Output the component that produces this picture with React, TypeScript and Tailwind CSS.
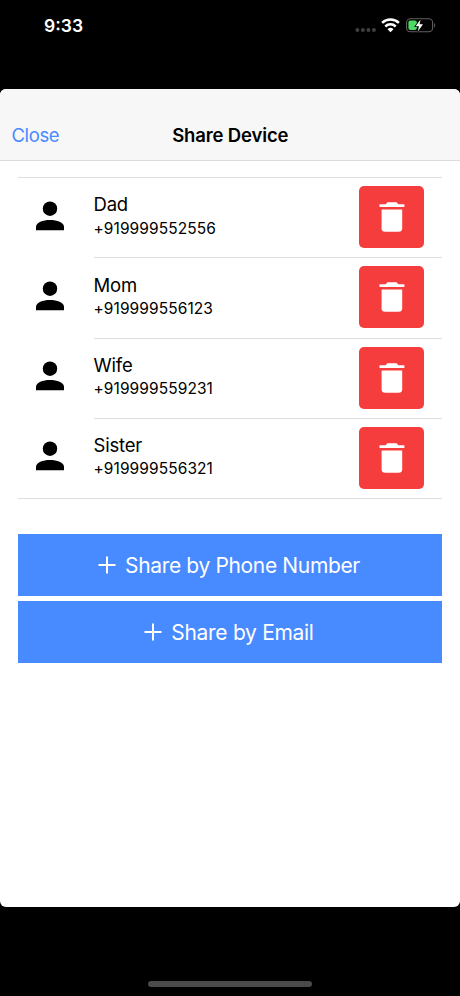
const contacts = [
  { name: 'Dad', phone: '+919999552556' },
  { name: 'Mom', phone: '+919999556123' },
  { name: 'Wife', phone: '+919999559231' },
  { name: 'Sister', phone: '+919999556321' },
];

function StatusBar() {
  return (
    <div className="flex h-[89px] items-start justify-between pl-11 pr-[23px] text-white">
      <span className="mt-[14px] text-[17.5px] font-semibold leading-6">9:33</span>
      <div className="mt-[18px] flex items-start">
        <svg width="22" height="16" viewBox="0 0 22 16" fill="#3f3f3f">
          <circle cx="2.4" cy="12" r="2" />
          <circle cx="7.9" cy="12" r="2" />
          <circle cx="13.4" cy="12" r="2" />
          <circle cx="18.9" cy="12" r="2" />
        </svg>
        <svg className="ml-1" width="20" height="16" viewBox="0 0 20 16" fill="none" stroke="#fff" strokeWidth="2.5">
          <path d="M1.1 4.8a12.1 12.1 0 0 1 16.8 0" />
          <path d="M4.3 8.5a7.4 7.4 0 0 1 10.4 0" />
          <path d="M9.5 14.2 6.5 11.3a4.3 4.3 0 0 1 6 0Z" fill="#fff" stroke="none" />
        </svg>
        <svg className="ml-[5px]" width="31" height="16" viewBox="0 0 31 16">
          <rect x="0.6" y="0.8" width="26" height="13" rx="3.8" fill="none" stroke="#606060" strokeWidth="1.1" />
          <path d="M28.2 5.2v4.2c1.4-.5 1.4-3.7 0-4.2Z" fill="#606060" />
          <rect x="2.4" y="2.6" width="8.5" height="9.4" rx="2" fill="#4cd964" />
          <path d="M14.5 1.4 9.6 8.2h3.3l-1 5.2L17 6.3h-3.4Z" fill="#fff" stroke="#000" strokeWidth="1.6" paintOrder="stroke" />
        </svg>
      </div>
    </div>
  );
}

function PersonIcon() {
  return (
    <svg width="28" height="30" viewBox="0 0 28 30" fill="#000">
      <circle cx="14" cy="7.7" r="7.2" />
      <path d="M0 29.3v-3.7c0-4.2 7-6.7 14-6.7s14 2.5 14 6.7v3.7Z" />
    </svg>
  );
}

function TrashIcon() {
  return (
    <svg width="26" height="32" viewBox="0 0 26 32" fill="#fff">
      <path d="M.5 3.3h6c.9-.3 1.2-2 2.3-2h8.4c1.1 0 1.4 1.7 2.3 2h5.9v2.8H.5Z" />
      <path d="M2.6 8.6h20.6v18.6a3.6 3.6 0 0 1-3.6 3.6H6.2a3.6 3.6 0 0 1-3.6-3.6Z" />
    </svg>
  );
}

function PlusIcon() {
  return (
    <svg width="18" height="18" viewBox="0 0 18 18" fill="none" stroke="#fff" strokeWidth="2">
      <path d="M9 .5v17M.5 9h17" />
    </svg>
  );
}

export default function App() {
  return (
    <div className="flex h-[996px] w-[460px] flex-col overflow-hidden bg-black font-['Inter',sans-serif] text-black">
      <StatusBar />
      <main className="h-[818px] overflow-hidden rounded-[6px] bg-white">
        <header className="grid h-[72px] grid-cols-[1fr_auto_1fr] items-start border-b border-[#dcdcdc] bg-[#f7f7f7] pl-[11.5px] pr-[11px] pt-[34px] leading-6">
          <button className="justify-self-start text-[18.5px] leading-6 tracking-[-0.4px] text-[#488aff]">Close</button>
          <h1 className="text-[18.5px] font-semibold leading-6 tracking-[-0.15px]">Share Device</h1>
        </header>
        <ul className="mx-[18px] mt-4 border-y border-[#dedede]">
          {contacts.map((c) => (
            <li key={c.name} className="group flex h-[80.25px] items-start pl-[18px] last:h-[79.5px]">
              <div className="w-7 shrink-0 pt-[22.6px]">
                <PersonIcon />
              </div>
              <div className="ml-[29.5px] flex h-full flex-1 justify-between border-b border-[#dedede] pr-[18px] group-last:border-b-0">
                <div className="pt-[14.4px]">
                  <div className="text-[18.5px] leading-6 tracking-[-0.2px]">{c.name}</div>
                  <div className="pt-[1.3px] text-[15.5px] leading-[22px] tracking-[0.08px]">{c.phone}</div>
                </div>
                <button className="mt-[8.2px] flex h-[62px] w-[65px] items-start justify-center rounded-[5px] bg-[#f53d3d] pt-[15px]">
                  <TrashIcon />
                </button>
              </div>
            </li>
          ))}
        </ul>
        <div className="mx-[18px] mt-[35px] flex flex-col gap-[4.75px] text-[21px] text-white">
          <button className="flex h-[62px] items-center justify-center gap-[9px] bg-[#488aff] pr-[2px]">
            <PlusIcon />
            <span className="tracking-[-0.35px]">Share by Phone Number</span>
          </button>
          <button className="flex h-[62px] items-center justify-center gap-[9px] bg-[#488aff] pr-[2px]">
            <PlusIcon />
            <span className="pt-px tracking-[-0.3px]">Share by Email</span>
          </button>
        </div>
      </main>
      <footer className="flex flex-1 items-end justify-center pb-[9px]">
        <div className="h-[6px] w-[164px] rounded-full bg-[#4b4b4b]" />
      </footer>
    </div>
  );
}
